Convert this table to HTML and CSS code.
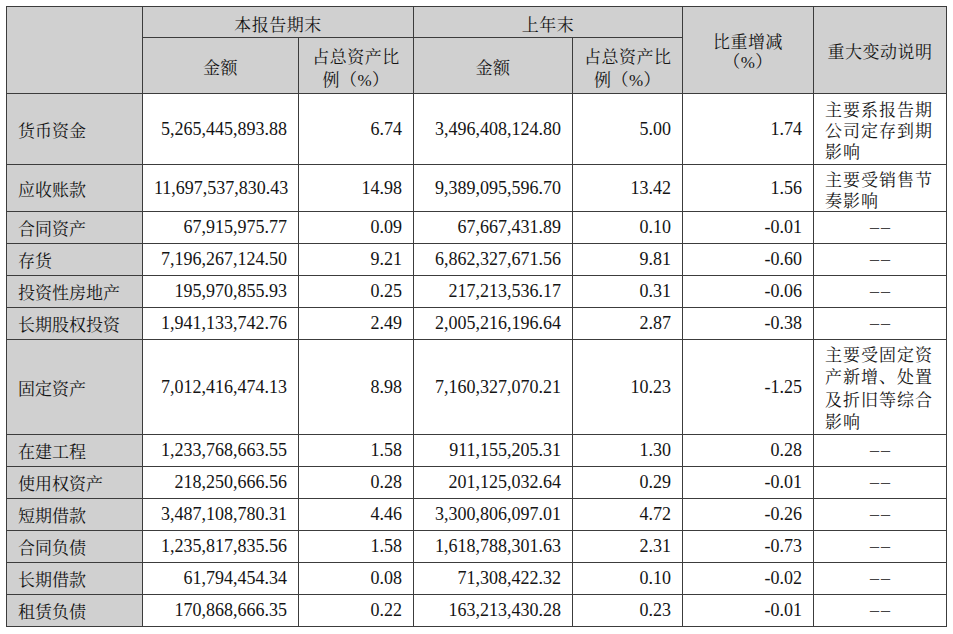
FILE: index.html
```html
<!DOCTYPE html>
<html lang="zh-CN">
<head>
<meta charset="utf-8">
<title>资产及负债状况</title>
<link rel="stylesheet" href="styles.css">
</head>
<body>
<div class="wrap">
<table class="fin">
  <colgroup>
    <col class="c-label">
    <col class="c-amt">
    <col class="c-pct">
    <col class="c-amt2">
    <col class="c-pct2">
    <col class="c-chg">
    <col class="c-note">
  </colgroup>
  <thead>
    <tr class="h1">
      <th rowspan="2"></th>
      <th colspan="2">本报告期末</th>
      <th colspan="2">上年末</th>
      <th rowspan="2" class="two">比重增减<br>（%）</th>
      <th rowspan="2" class="note-h">重大变动说明</th>
    </tr>
    <tr class="h2">
      <th>金额</th>
      <th class="two2">占总资产比<br>例（%）</th>
      <th>金额</th>
      <th class="two2">占总资产比<br>例（%）</th>
    </tr>
  </thead>
  <tbody>
    <tr class="r71"><th>货币资金</th><td>5,265,445,893.88</td><td>6.74</td><td>3,496,408,124.80</td><td>5.00</td><td>1.74</td><td class="note">主要系报告期公司定存到期影响</td></tr>
    <tr class="r47"><th>应收账款</th><td>11,697,537,830.43</td><td>14.98</td><td>9,389,095,596.70</td><td>13.42</td><td>1.56</td><td class="note">主要受销售节奏影响</td></tr>
    <tr class="r32"><th>合同资产</th><td>67,915,975.77</td><td>0.09</td><td>67,667,431.89</td><td>0.10</td><td>-0.01</td><td class="dash">––</td></tr>
    <tr class="r32"><th>存货</th><td>7,196,267,124.50</td><td>9.21</td><td>6,862,327,671.56</td><td>9.81</td><td>-0.60</td><td class="dash">––</td></tr>
    <tr class="r32"><th>投资性房地产</th><td>195,970,855.93</td><td>0.25</td><td>217,213,536.17</td><td>0.31</td><td>-0.06</td><td class="dash">––</td></tr>
    <tr class="r32"><th>长期股权投资</th><td>1,941,133,742.76</td><td>2.49</td><td>2,005,216,196.64</td><td>2.87</td><td>-0.38</td><td class="dash">––</td></tr>
    <tr class="r95"><th>固定资产</th><td>7,012,416,474.13</td><td>8.98</td><td>7,160,327,070.21</td><td>10.23</td><td>-1.25</td><td class="note tall">主要受固定资产新增、处置及折旧等综合影响</td></tr>
    <tr class="r32"><th>在建工程</th><td>1,233,768,663.55</td><td>1.58</td><td>911,155,205.31</td><td>1.30</td><td>0.28</td><td class="dash">––</td></tr>
    <tr class="r32"><th>使用权资产</th><td>218,250,666.56</td><td>0.28</td><td>201,125,032.64</td><td>0.29</td><td>-0.01</td><td class="dash">––</td></tr>
    <tr class="r32"><th>短期借款</th><td>3,487,108,780.31</td><td>4.46</td><td>3,300,806,097.01</td><td>4.72</td><td>-0.26</td><td class="dash">––</td></tr>
    <tr class="r32"><th>合同负债</th><td>1,235,817,835.56</td><td>1.58</td><td>1,618,788,301.63</td><td>2.31</td><td>-0.73</td><td class="dash">––</td></tr>
    <tr class="r32"><th>长期借款</th><td>61,794,454.34</td><td>0.08</td><td>71,308,422.32</td><td>0.10</td><td>-0.02</td><td class="dash">––</td></tr>
    <tr class="r32"><th>租赁负债</th><td>170,868,666.35</td><td>0.22</td><td>163,213,430.28</td><td>0.23</td><td>-0.01</td><td class="dash">––</td></tr>
  </tbody>
</table>
</div>
</body>
</html>
```

FILE: styles.css
```css
html, body {
  margin: 0;
  padding: 0;
  background: #ffffff;
}

.wrap {
  padding: 6px 0 0 6px;
}

.fin {
  border-collapse: collapse;
  table-layout: fixed;
  width: 940px;
  font-family: "Liberation Serif", "Noto Serif CJK SC", "Noto Sans CJK SC", serif;
  font-size: 18px;
  color: #141414;
  border: 1.5px solid #4a4a4a;
}

.c-label { width: 136px; }
.c-amt { width: 156px; }
.c-pct { width: 115px; }
.c-amt2 { width: 159px; }
.c-pct2 { width: 110px; }
.c-chg { width: 131px; }
.c-note { width: 133px; }

.fin th,
.fin td {
  border: 1px solid #3c3c3c;
  padding: 0 11px;
  vertical-align: middle;
  font-weight: normal;
  white-space: nowrap;
}

.fin thead th {
  background: #d0d0d0;
  text-align: center;
  line-height: 22px;
  font-size: 17px;
  letter-spacing: 0.5px;
}

.fin .h1 { height: 31px; }
.fin .h1 th { padding-top: 7px; }
.fin .h2 { height: 56px; }
.fin .h2 th { padding-top: 6px; }

.fin thead .two { line-height: 20px; padding-top: 6px; }
.fin thead .two2 { line-height: 23px; }
.fin thead .note-h { padding-top: 6px; }

.fin tbody th {
  background: #d0d0d0;
  text-align: left;
  font-family: "Noto Serif CJK SC", "Noto Sans CJK SC", serif;
  font-size: 17px;
}

.fin tbody td {
  text-align: right;
  padding-right: 11px;
}

.fin tbody td.note {
  white-space: normal;
  text-align: left;
  padding: 1px 12px 0 11px;
  font-family: "Noto Serif CJK SC", "Noto Sans CJK SC", serif;
  font-size: 17px;
  letter-spacing: 1px;
  line-height: 21px;
}

.fin tbody td.note.tall {
  line-height: 22.5px;
}

.fin tbody td.dash {
  text-align: center;
  color: #444;
  font-family: "Liberation Serif", serif;
  letter-spacing: 2px;
  padding-left: 13px;
}

.r71 { height: 71px; }
.r47 { height: 47px; }
.r32 { height: 32px; }
.r95 { height: 95px; }
```
